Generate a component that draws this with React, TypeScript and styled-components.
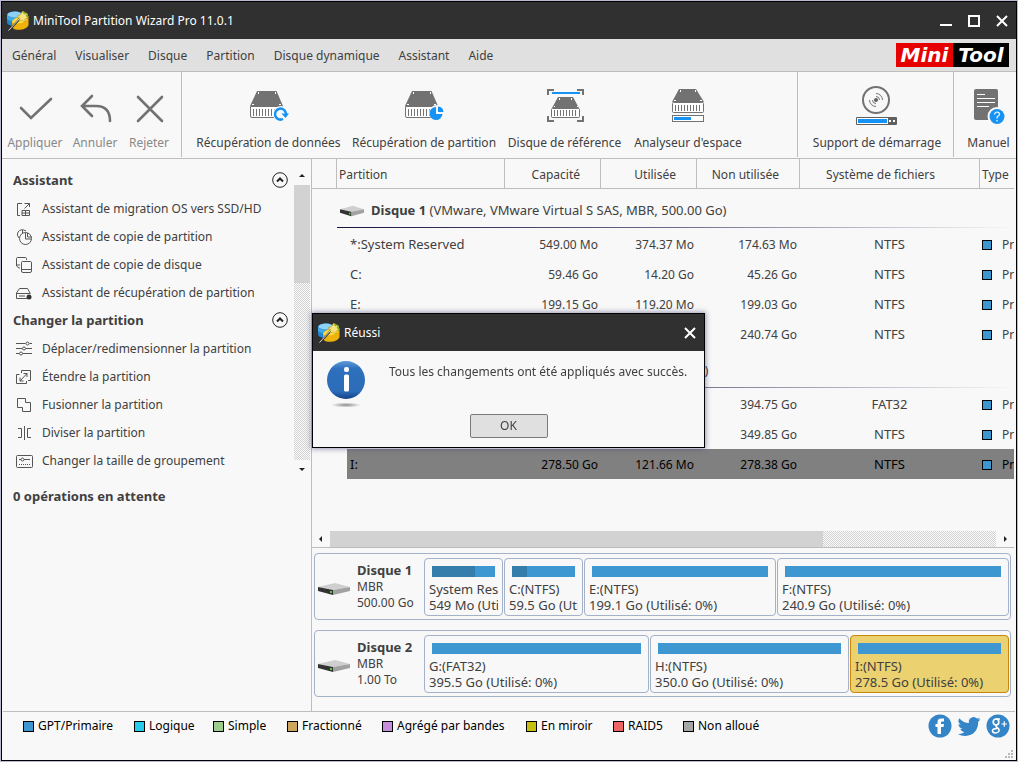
import React from "react";
import styled, { createGlobalStyle, css } from "styled-components";

const GlobalStyle = createGlobalStyle`
  *, *::before, *::after { box-sizing: border-box; }
  body { margin: 0; background: #b9b9cf; }
  body, button { font-family: "Noto Sans", Tahoma, sans-serif; font-size: 12px; line-height: 16px; color: #404040; }
  button { margin: 0; padding: 0; border: 0; background: none; cursor: pointer; }
  h2, p, ul { margin: 0; padding: 0; list-style: none; }
  svg { display: block; flex: none; }
`;

const line = "#bdbdbd";

const Page = styled.div`
  min-height: 100vh;
  padding: 1px;
  display: flex;
`;
const Window = styled.div`
  flex: 1;
  min-width: 0;
  display: flex;
  flex-direction: column;
  border: 1px solid #000;
  background: #f8f8f8;
`;
const TitleBar = styled.header`
  display: flex;
  align-items: center;
  gap: 4px;
  height: 37px;
  padding: 0 8px 0 5px;
  background: #303030;
  color: #fff;
`;
const TitleText = styled.span`
  flex: 1;
  white-space: nowrap;
`;
const WindowButtons = styled.div`
  display: flex;
  gap: 16px;
`;
const MenuBar = styled.nav`
  display: flex;
  align-items: center;
  gap: 19px;
  height: 33px;
  padding: 0 7px 0 10px;
  background: #e0e0e0;
  border-bottom: 1px solid ${line};
`;
const MenuItem = styled.button`
  padding-top: 2px;
  white-space: nowrap;
`;
const Brand = styled.a`
  display: flex;
  margin-left: auto;
  height: 24px;
  color: #fff;
  background: #000;
  text-decoration: none;
  font: italic bold 20px/24px "DejaVu Sans", Verdana, sans-serif;
`;
const BrandHalf = styled.span<{ $red?: boolean }>`
  width: ${(p) => (p.$red ? 57 : 56)}px;
  text-align: center;
  background: ${(p) => (p.$red ? "#e60000" : "#000")};
`;

const Toolbar = styled.div`
  display: flex;
  height: 87px;
  padding-bottom: 1px;
  border-bottom: 1px solid ${line};
`;
const ToolGroup = styled.div<{ $width?: number; $pad: number; $last?: boolean }>`
  display: flex;
  gap: 11px;
  padding-left: ${(p) => p.$pad}px;
  border-right: ${(p) => (p.$last ? "0" : `1px solid ${line}`)};
  ${(p) => (p.$width ? css`flex: 0 0 ${p.$width}px;` : css`flex: 1;`)}
`;
const ToolButton = styled.button<{ $width: number; $muted?: boolean }>`
  display: flex;
  flex-direction: column;
  align-items: center;
  justify-content: flex-end;
  gap: 8px;
  width: ${(p) => p.$width}px;
  padding-bottom: 6px;
  white-space: nowrap;
  color: ${(p) => (p.$muted ? "#888" : "#404040")};
`;

const Body = styled.div`
  flex: 1;
  display: flex;
`;
const Sidebar = styled.aside`
  flex: 0 0 310px;
  border-right: 1px solid ${line};
`;
const SideScroll = styled.div`
  display: flex;
  padding-top: 8px;
`;
const SideContent = styled.div`
  flex: 1;
  padding: 0 0 3px 11px;
`;
const SideHeading = styled.h2`
  display: flex;
  align-items: center;
  justify-content: space-between;
  height: 28px;
  padding: 0 6px 2px 0;
  font-size: 13px;
`;
const SideItem = styled.button`
  display: flex;
  align-items: center;
  gap: 10px;
  width: 100%;
  height: 28px;
  padding-left: 3px;
  text-align: left;
  white-space: nowrap;
`;
const Pending = styled.p`
  padding: 10px 11px;
  font-size: 13px;
  font-weight: bold;
`;
const checker = css`
  background: repeating-conic-gradient(#d2d2d2 0 25%, #fbfbfb 0 50%) 0 0 / 2px 2px;
`;
const VScroll = styled.div`
  display: flex;
  flex-direction: column;
  width: 16px;
  margin-right: 1px;
`;
const HScroll = styled.div`
  display: flex;
  height: 17px;
  margin-right: 2px;
  border-bottom: 1px solid ${line};
`;
const Track = styled.div`
  flex: 1;
  display: flex;
  ${checker}
`;
const VThumb = styled.div`
  width: 100%;
  height: 98px;
  background: #d2d2d2;
`;
const HThumb = styled.div`
  width: 74%;
  background: #d2d2d2;
`;
const ArrowButton = styled.button`
  display: grid;
  place-items: center;
  width: 18px;
  height: 16px;
  flex: none;
`;
const VArrowButton = styled(ArrowButton)`
  width: 16px;
  height: 18px;
`;

const Main = styled.main`
  flex: 1;
  min-width: 0;
  display: flex;
  flex-direction: column;
`;
const TableArea = styled.div`
  flex: 1;
  margin-right: 2px;
  overflow: hidden;
`;
const Table = styled.table`
  width: calc(100% + 60px);
  table-layout: fixed;
  border-collapse: separate;
  border-spacing: 0;
`;
const Th = styled.th<{ $width?: number; $align?: string; $right?: number }>`
  width: ${(p) => (p.$width ? `${p.$width}px` : "auto")};
  height: 30px;
  padding: 2px ${(p) => p.$right ?? 20}px 0 2px;
  border-right: 1px solid ${line};
  border-bottom: 1px solid ${line};
  font-weight: normal;
  text-align: ${(p) => p.$align ?? "right"};
`;
const DiskCell = styled.td`
  height: 40px;
  padding: 0 60px 0 25px;
`;
const DiskTitle = styled.div`
  display: flex;
  align-items: center;
  gap: 7px;
  height: 40px;
  padding: 2px 0 0 3px;
  background: linear-gradient(to right, #14143c, #6c6c8c 50%, #f8f8f8) 0 38px / 100% 1px no-repeat;
  font-size: 13px;
  white-space: nowrap;

  svg { margin-top: 2px; }
`;
const Tr = styled.tr<{ $selected?: boolean }>`
  height: 30px;
  ${(p) =>
    p.$selected &&
    css`
      color: #000;
      td { background: #808080; }
      td:first-child { background: none; }
      td:nth-child(2) { background: linear-gradient(to right, #f8f8f8 10px, #808080 10px); }
    `}
`;
const Td = styled.td<{ $align?: string }>`
  padding: 2px 3px 0 2px;
  text-align: ${(p) => p.$align ?? "right"};
  white-space: nowrap;
`;
const NameTd = styled(Td)`
  padding: 0 3px 0 13px;
  font-size: 13px;
  text-align: left;
`;
const SystemTd = styled(Td)`
  padding: 0 3px 0 2px;
  font-size: 13px;
  text-align: center;
`;
const TypeValue = styled.span`
  display: flex;
  align-items: center;
  gap: 10px;
`;
const Swatch = styled.span<{ $color: string; $size: number }>`
  flex: none;
  width: ${(p) => p.$size}px;
  height: ${(p) => p.$size}px;
  border: 1px solid #000;
  background: ${(p) => p.$color};
`;

const DiskMap = styled.section`
  display: flex;
  flex-direction: column;
  gap: 10px;
  padding: 5px 5px 14px 2px;
`;
const DiskCard = styled.div`
  display: flex;
  height: 67px;
  padding: 4px 1px 0 3px;
  border: 1px solid #a3b1c9;
  border-radius: 4px;
`;
const DiskInfo = styled.div`
  display: flex;
  align-items: center;
  gap: 7px;
  flex: 0 0 106px;
  height: 58px;
  white-space: nowrap;

  svg { margin-top: 4px; }
`;
const DiskName = styled.b`
  display: block;
  padding-bottom: 1px;
  font-size: 13px;
  line-height: 15px;
`;
const Blocks = styled.div<{ $columns: string }>`
  flex: 1;
  display: grid;
  grid-template-columns: ${(p) => p.$columns};
  gap: 1px;
  height: 58px;
`;
const Block = styled.button<{ $selected?: boolean }>`
  display: flex;
  flex-direction: column;
  min-width: 0;
  padding: 7px 4px 0;
  border: 1px solid ${(p) => (p.$selected ? "#c8860a" : "#a3b1c9")};
  border-radius: 4px;
  background: ${(p) => (p.$selected ? "#ebd170" : "#f8f8f8")};
  font-size: 13px;
  text-align: left;
`;
const Bar = styled.span`
  height: 11px;
  margin: 0 3px 4px;
  align-self: stretch;
  background: #3e97d1;
`;
const BarUsed = styled.span`
  display: block;
  height: 100%;
  background: #357dab;
`;
const BlockText = styled.span`
  max-width: 100%;
  overflow: hidden;
  white-space: nowrap;
`;

const Footer = styled.footer`
  display: flex;
  justify-content: space-between;
  height: 49px;
  margin: 0 1px;
  padding: 2px 2px 2px 20px;
  border-top: 1px solid ${line};
  color: #000;
`;
const Legend = styled.ul`
  display: flex;
  height: 24px;
`;
const LegendItem = styled.li<{ $width: number }>`
  display: flex;
  align-items: center;
  gap: 4px;
  width: ${(p) => p.$width}px;
  white-space: nowrap;
`;
const FooterEnd = styled.div`
  display: flex;
  flex-direction: column;
  justify-content: space-between;
  align-items: flex-end;
`;
const Social = styled.div`
  display: flex;
  gap: 5px;
  padding-right: 3px;
`;

const Overlay = styled.div`
  position: fixed;
  inset: 0;
  display: grid;
  place-items: center;
  padding: 0 1px 1px 0;
`;
const Dialog = styled.div`
  width: 393px;
  border: 1px solid #000;
  background: #f8f8f8;
  box-shadow: 0 0 5px 1px rgba(60, 60, 120, 0.5);
`;
const DialogBody = styled.div`
  display: flex;
  gap: 24px;
  height: 62px;
  padding: 10px 9px 0 14px;
`;
const DialogText = styled.p`
  padding-top: 3px;
  white-space: nowrap;
`;
const DialogActions = styled.div`
  display: flex;
  justify-content: center;
  padding: 1px 0 9px;
`;
const OkButton = styled.button`
  width: 78px;
  height: 24px;
  border: 1px solid #7a7a7a;
  border-radius: 2px;
  background: #e0e0e0;
`;

const AppIcon = () => (
  <svg width="22" height="22" viewBox="0 0 22 22" aria-hidden="true">
    <path d="M0 5C0 2 6 1 11 1.500V16C5 17 0 15 0 12Z" fill="#1f86d0" />
    <path d="M0 5C3 8 8 8 11 7V11C6 12 2 11 0 9Z" fill="#3fa9ea" />
    <ellipse cx="8" cy="4.500" rx="7.500" ry="3" fill="#8fd0f5" />
    <path d="M5 12C6 8 12 6 21.500 6V15C20 20.500 7 21.500 5 17Z" fill="#eeb20a" />
    <path d="M5 12C7 8 14 6 21 7C21 12 10 15.500 5 12Z" fill="#ffe03c" />
    <path d="M14 3l2-2 5 3v5l-5-1z" fill="#76b82a" />
    <path d="M1 21.500L13 8.500" stroke="#333" strokeWidth="2" />
    <path d="M1.500 20.500L13 8" stroke="#ddd" strokeWidth="1" />
    <path d="M16 1l1 3 3-1-1 3 2 2-3 1 0 3-3-2-3 1 1-3-3-2 3-1z" fill="#f8e27a" stroke="#a88a20" strokeWidth=".5" />
  </svg>
);
const CloseIcon = () => (
  <svg width="12" height="12" viewBox="0 0 12 12" aria-hidden="true">
    <path d="M1 1L11 11M11 1L1 11" stroke="#fff" strokeWidth="2" />
  </svg>
);

const Hdd = () => (
  <g>
    <path d="M9 4H28.500L35 19H2Z" fill="#727272" />
    <path d="M10 5h1v2h-1zM27 5h1v2h-1zM4 17h2v1H4zM31 17h2v1h-2z" fill="#fff" />
    <path d="M2.500 19.500h32v9.500q0 1.500-1.500 1.500H4q-1.500 0-1.500-1.500Z" fill="#fff" stroke="#727272" />
    <path d="M5.500 22v7M8.500 22v7M11.500 22v7M14.500 22v7M17.500 22v7M20.500 22v7M23.500 22v7M26.500 22v7M29.500 22v7M32 22v7" stroke="#727272" />
  </g>
);
const stroke = { fill: "none", stroke: "#727272", strokeWidth: 2.6, strokeLinecap: "round" as const };

const toolIcons: Record<string, React.ReactNode> = {
  apply: <path d="M7 21L17 31L37 12" {...stroke} />,
  undo: <path d="M18 9L8 19L18 29M8 19H22Q36 19 36 34" {...stroke} />,
  discard: <path d="M10 10L34 34M34 10L10 34" {...stroke} />,
  dataRecovery: (
    <>
      <Hdd />
      <circle cx="33" cy="27" r="8" fill="#f8f8f8" />
      <path d="M35 32A5.500 5.500 0 1 1 38 27" fill="none" stroke="#1492f5" strokeWidth="2.500" />
      <path d="M33.500 26.500H41L37.500 31Z" fill="#1492f5" />
    </>
  ),
  partitionRecovery: (
    <>
      <Hdd />
      <circle cx="34" cy="26" r="8" fill="#f8f8f8" />
      <path d="M33 27V20A6.500 6.500 0 1 0 39.500 27Z" fill="#1492f5" />
      <path d="M35 25V19.500A6 6 0 0 1 40.500 25Z" fill="#1492f5" />
    </>
  ),
  benchmark: (
    <g transform="translate(2 0)">
      <path d="M2 8V3H8M31 3H37V8M2 29V34H8M31 34H37V29" fill="none" stroke="#727272" strokeWidth="2" />
      <path d="M6 6H34" stroke="#1492f5" strokeWidth="2" />
      <path d="M12 10H27L33 21H6Z" fill="#727272" />
      <path d="M13 11h1v2h-1zM25 11h1v2h-1zM8 19h1v1H8zM31 19h1v1h-1z" fill="#fff" />
      <rect x="5.500" y="21.500" width="28" height="9" rx="1" fill="#fff" stroke="#727272" />
      <path d="M8.500 23v6M11.500 23v6M14.500 23v6M17.500 23v6M20.500 23v6M23.500 23v6M26.500 23v6M29.500 23v6" stroke="#727272" />
    </g>
  ),
  space: (
    <g transform="translate(1 0)">
      <path d="M11 2H28L36 15H4Z" fill="#727272" />
      <path d="M12 3h1v2h-1zM27 3h1v2h-1zM6 13h2v1H6zM32 13h2v1h-2z" fill="#fff" />
      <rect x="4.500" y="15.500" width="31" height="10" rx="1" fill="#fff" stroke="#727272" />
      <path d="M7.500 18v6M10.500 18v6M13.500 18v6M16.500 18v6M19.500 18v6M22.500 18v6M25.500 18v6M28.500 18v6M31.500 18v6" stroke="#727272" />
      <rect x="4.500" y="28.500" width="31" height="6" fill="#fff" stroke="#727272" />
      <path d="M6 30h17v3H6z" fill="#1492f5" />
    </g>
  ),
  bootMedia: (
    <>
      <circle cx="20" cy="13" r="13" fill="#f8f8f8" stroke="#727272" strokeWidth="2" />
      <circle cx="20" cy="13" r="2" fill="#606060" />
      <path d="M20 6.500A6.500 6.500 0 0 1 26.500 13M13.500 13A6.500 6.500 0 0 0 20 19.500M20 9.500A3.500 3.500 0 0 1 23.500 13M16.500 13A3.500 3.500 0 0 0 20 16.500" fill="none" stroke="#727272" strokeWidth="1" />
      <rect x="0" y="30" width="41" height="8" rx="1" fill="#606060" />
      <path d="M1 31H32V37H1z" fill="#fff" />
      <path d="M2 32H31V36H2z" fill="#1492f5" />
      <path d="M33 33h2v2h-2zM37 33h2v2h-2z" fill="#fff" />
    </>
  ),
  manual: (
    <g transform="translate(1 0)">
      <rect x="5" y="2" width="24" height="31" rx="2" fill="#727272" />
      <path d="M8 7.500h8M8 11.500h18M8 15.500h18M8 19.500h12" stroke="#fff" />
      <circle cx="28" cy="29.500" r="9.500" fill="#f8f8f8" />
      <circle cx="28" cy="29.500" r="7.500" fill="#1492f5" />
      <path d="M25.500 27.500Q26 25 28 25Q30.500 25 30.500 27.500Q30.500 28.500 28.500 29.500Q28 30 28 31.500M28 33v1.500" fill="none" stroke="#fff" strokeWidth="1.200" />
    </g>
  ),
};
const ToolIcon = ({ name }: { name: string }) => (
  <svg width="42" height="40" viewBox="0 0 42 40" aria-hidden="true" overflow="visible">
    {toolIcons[name]}
  </svg>
);

const sideIcons: Record<string, React.ReactNode> = {
  migrate: (
    <>
      <path d="M6 2.500H1.500V14.500H4M8.500 2.500H13.500V6M13.500 2.500L8.500 7.500" />
      <path d="M6 9.500h7.500v5H6zM6 12h7.500M9.500 9.500v5" />
    </>
  ),
  copyPartition: (
    <>
      <path d="M3 9A5 5 0 0 1 2 3Q5-1 10 2M6.500 1v3" />
      <circle cx="9.500" cy="9.500" r="6" />
      <path d="M9.500 4V10H15M11.500 4v4h4" />
    </>
  ),
  copyDisk: <path d="M4 11H3L.5 9V1.500Q.5.500 1.500.500H9.500Q10.500.500 10.500 1.500V3M.5 8H4M6.500 4.500H14.500Q15.500 4.500 15.500 6V14Q15.500 15.500 14 15.500H7Q5.500 15.500 5.500 14V5.500Q5.500 4.500 6.500 4.500M5.500 12.500H15.500" />,
  recover: (
    <>
      <path d="M3.500 3.500H11.500L14 8M3.500 3.500L.5 8V13.500H11M.5 8.500H14.500M3 11h6" />
      <circle cx="13" cy="12" r="2.500" fill="#333" stroke="none" />
    </>
  ),
  resize: (
    <>
      <path d="M0 2.500H9.500M13.500 2.500H16M0 7.500H6M10 7.500H16M0 12.500H3M7 12.500H16" />
      <circle cx="11.500" cy="2.500" r="1.500" />
      <circle cx="8" cy="7.500" r="1.500" />
      <circle cx="5" cy="12.500" r="1.500" />
    </>
  ),
  extend: <path d="M5.500 4V1.500H14.500V11.500H12M3.500 5.500H.5V14.500H10.500V12M4 12L11 4.500M7.500 4.500H11V8M4 8.500V12H7.500" />,
  merge: <path d="M1.500 1.500H9.500V5.500H14.500V14.500H6.500V10.500H1.500Z" />,
  split: <path d="M8.500 1V15M2 3.500H5.500V12.500H2M15 3.500H11.500V12.500H15" />,
  cluster: (
    <>
      <rect x=".5" y="2.500" width="16" height="12" rx="1" />
      <path d="M3 6.500h2M8 6.500h6" />
      <circle cx="6.500" cy="6.500" r="1.500" />
      <path d="M3 11.500h11" strokeDasharray="1 1" />
    </>
  ),
};
const SideIcon = ({ name }: { name: string }) => (
  <svg width="16" height="16" viewBox="0 0 16 16" fill="none" stroke="#555" aria-hidden="true" overflow="visible">
    {sideIcons[name]}
  </svg>
);
const CollapseIcon = () => (
  <svg width="16" height="16" viewBox="0 0 16 16" fill="none" stroke="#222" aria-hidden="true">
    <circle cx="8" cy="8" r="7.300" />
    <path d="M5 9.500L8 6.500L11 9.500" strokeWidth="2" />
  </svg>
);
const Arrow = ({ d }: { d: string }) => (
  <svg width="8" height="8" viewBox="0 0 8 8" fill="#222" aria-hidden="true">
    <path d={d} />
  </svg>
);
const DriveIcon = ({ width, height }: { width: number; height: number }) => (
  <svg width={width} height={height} viewBox="0 0 32 14" preserveAspectRatio="none" aria-hidden="true">
    <path d="M0 5L17 1L32 5L15 8Z" fill="#cfcfcf" />
    <path d="M15 8L32 5V9L15 13Z" fill="#a2a2a2" />
    <path d="M0 5L15 8V13L0 9Z" fill="#333" />
    <rect x="12" y="9" width="2" height="2" fill="#4fd02c" />
  </svg>
);
const InfoIcon = () => (
  <svg width="38" height="48" viewBox="0 0 38 48" aria-hidden="true">
    <defs>
      <linearGradient id="ball" x1="0" y1="0" x2="0" y2="1">
        <stop offset="0" stopColor="#5f9bd8" />
        <stop offset=".2" stopColor="#2e70bd" />
        <stop offset=".8" stopColor="#2c6cb8" />
        <stop offset="1" stopColor="#123f86" />
      </linearGradient>
      <radialGradient id="ground">
        <stop offset="0" stopColor="#8c8c8c" />
        <stop offset="1" stopColor="#8c8c8c" stopOpacity="0" />
      </radialGradient>
    </defs>
    <ellipse cx="19" cy="44" rx="15" ry="2.500" fill="url(#ground)" />
    <circle cx="19" cy="19" r="19" fill="url(#ball)" />
    <rect x="17" y="6" width="5" height="5" rx="2" fill="#fff" />
    <rect x="17" y="13.500" width="5" height="17" rx="1.500" fill="#fff" />
  </svg>
);
const Facebook = () => (
  <svg width="24" height="24" viewBox="0 0 24 24" aria-hidden="true">
    <circle cx="12" cy="12" r="11.500" fill="#3484c8" />
    <path d="M9.500 20V13H7.500V10H9.500V8Q9.500 4.500 13 4.500H16V7.500H14Q13 7.500 13 8.500V10H16L15.500 13H13V20Z" fill="#fff" />
  </svg>
);
const Twitter = () => (
  <svg width="24" height="24" viewBox="0 0 24 24" aria-hidden="true">
    <path fill="#3484c8" d="M23.500 5q-1 .6-2.400.8 1.200-.9 1.800-2.300-1.300.8-2.900 1.100A4.700 4.700 0 0 0 12 9Q6 8.700 2.300 4.200 0 8 3.700 10.600q-1.100 0-2.200-.6.100 3.600 3.800 4.700-1 .3-2.100.1 1.100 3 4.400 3.200-3 2.300-6.800 1.900 3.500 2.200 7.500 2.100Q21 21 21.300 7.600q1.300-1 2.200-2.600Z" />
  </svg>
);
const GooglePlus = () => (
  <svg width="24" height="24" viewBox="0 0 24 24" fill="none" stroke="#fff" aria-hidden="true">
    <circle cx="12" cy="12" r="11.500" fill="#3484c8" stroke="none" />
    <ellipse cx="10" cy="8" rx="2.800" ry="3" strokeWidth="1.700" />
    <path d="M10 5H14M11 11Q9 12 11 13.500Q13.500 15 13 17Q12 19 9.500 19Q6.500 19 6.500 16.800Q6.500 14.500 11 14.500" strokeWidth="1.600" />
    <path d="M15.500 10H21M18.250 7.250V12.750" strokeWidth="1.200" />
  </svg>
);

const menus = ["Général", "Visualiser", "Disque", "Partition", "Disque dynamique", "Assistant", "Aide"];

type Tool = { icon: string; label: string; width: number };
const editTools: Tool[] = [
  { icon: "apply", label: "Appliquer", width: 54 },
  { icon: "undo", label: "Annuler", width: 44 },
  { icon: "discard", label: "Rejeter", width: 42 },
];
const diskTools: Tool[] = [
  { icon: "dataRecovery", label: "Récupération de données", width: 145 },
  { icon: "partitionRecovery", label: "Récupération de partition", width: 144 },
  { icon: "benchmark", label: "Disque de référence", width: 115 },
  { icon: "space", label: "Analyseur d'espace", width: 110 },
];
const sections = [
  {
    title: "Assistant",
    items: [
      ["migrate", "Assistant de migration OS vers SSD/HD"],
      ["copyPartition", "Assistant de copie de partition"],
      ["copyDisk", "Assistant de copie de disque"],
      ["recover", "Assistant de récupération de partition"],
    ],
  },
  {
    title: "Changer la partition",
    items: [
      ["resize", "Déplacer/redimensionner la partition"],
      ["extend", "Étendre la partition"],
      ["merge", "Fusionner la partition"],
      ["split", "Diviser la partition"],
      ["cluster", "Changer la taille de groupement"],
    ],
  },
];
const disks = [
  {
    name: "Disque 1",
    detail: "(VMware, VMware Virtual S SAS, MBR, 500.00 Go)",
    size: "500.00 Go",
    columns: "79fr 79fr 192fr 232fr",
    rows: [
      ["*:System Reserved", "549.00 Mo", "374.37 Mo", "174.63 Mo", "NTFS"],
      ["C:", "59.46 Go", "14.20 Go", "45.26 Go", "NTFS"],
      ["E:", "199.15 Go", "119.20 Mo", "199.03 Go", "NTFS"],
      ["F:", "240.86 Go", "122.00 Mo", "240.74 Go", "NTFS"],
    ],
    blocks: [
      { name: "System Reserved", size: "549 Mo (Utilisé: 68%)", used: 68 },
      { name: "C:(NTFS)", size: "59.5 Go (Utilisé: 24%)", used: 24 },
      { name: "E:(NTFS)", size: "199.1 Go (Utilisé: 0%)", used: 0 },
      { name: "F:(NTFS)", size: "240.9 Go (Utilisé: 0%)", used: 0 },
    ],
  },
  {
    name: "Disque 2",
    detail: "(VMware, VMware Virtual S SAS, MBR, 1.00 To)",
    size: "1.00 To",
    columns: "225fr 199fr 159fr",
    rows: [
      ["G:", "395.50 Go", "768.00 Mo", "394.75 Go", "FAT32"],
      ["H:", "350.00 Go", "150.00 Mo", "349.85 Go", "NTFS"],
      ["I:", "278.50 Go", "121.66 Mo", "278.38 Go", "NTFS"],
    ],
    blocks: [
      { name: "G:(FAT32)", size: "395.5 Go (Utilisé: 0%)", used: 0 },
      { name: "H:(NTFS)", size: "350.0 Go (Utilisé: 0%)", used: 0 },
      { name: "I:(NTFS)", size: "278.5 Go (Utilisé: 0%)", used: 0 },
    ],
  },
];
const selectedName = "I:";
const legend: [string, string, number][] = [
  ["#3e97d1", "GPT/Primaire", 111],
  ["#27ccec", "Logique", 79],
  ["#9ccb8c", "Simple", 74],
  ["#cda55c", "Fractionné", 95],
  ["#c68fdc", "Agrégé par bandes", 144],
  ["#c5c013", "En miroir", 87],
  ["#ee6363", "RAID5", 70],
  ["#a6a6a6", "Non alloué", 90],
];

const ToolSet = ({ tools, muted }: { tools: Tool[]; muted?: boolean }) => (
  <>
    {tools.map((t) => (
      <ToolButton key={t.icon} $width={t.width} $muted={muted}>
        <ToolIcon name={t.icon} />
        {t.label}
      </ToolButton>
    ))}
  </>
);

export default function App() {
  return (
    <Page>
      <GlobalStyle />
      <Window>
        <TitleBar>
          <AppIcon />
          <TitleText>MiniTool Partition Wizard Pro 11.0.1</TitleText>
          <WindowButtons>
            <button aria-label="Réduire">
              <svg width="12" height="12" viewBox="0 0 12 12"><path d="M0 9h12v2H0z" fill="#fff" /></svg>
            </button>
            <button aria-label="Agrandir">
              <svg width="12" height="12" viewBox="0 0 12 12"><rect x="1" y="1" width="10" height="10" fill="none" stroke="#fff" strokeWidth="2" /></svg>
            </button>
            <button aria-label="Fermer"><CloseIcon /></button>
          </WindowButtons>
        </TitleBar>

        <MenuBar>
          {menus.map((m) => (
            <MenuItem key={m}>{m}</MenuItem>
          ))}
          <Brand href="#">
            <BrandHalf $red>Mini</BrandHalf>
            <BrandHalf>Tool</BrandHalf>
          </Brand>
        </MenuBar>

        <Toolbar>
          <ToolGroup $width={180} $pad={6}>
            <ToolSet tools={editTools} muted />
          </ToolGroup>
          <ToolGroup $pad={14}>
            <ToolSet tools={diskTools} />
          </ToolGroup>
          <ToolGroup $width={156} $pad={14}>
            <ToolSet tools={[{ icon: "bootMedia", label: "Support de démarrage", width: 130 }]} />
          </ToolGroup>
          <ToolGroup $width={62} $pad={14} $last>
            <ToolSet tools={[{ icon: "manual", label: "Manuel", width: 41 }]} />
          </ToolGroup>
        </Toolbar>

        <Body>
          <Sidebar>
            <SideScroll>
              <SideContent>
                {sections.map((s) => (
                  <section key={s.title}>
                    <SideHeading>
                      {s.title}
                      <button aria-label={`Replier ${s.title}`}><CollapseIcon /></button>
                    </SideHeading>
                    {s.items.map(([icon, label]) => (
                      <SideItem key={icon}>
                        <SideIcon name={icon} />
                        {label}
                      </SideItem>
                    ))}
                  </section>
                ))}
              </SideContent>
              <VScroll>
                <VArrowButton aria-label="Défiler vers le haut"><Arrow d="M1 5L4 2L7 5Z" /></VArrowButton>
                <Track><VThumb /></Track>
                <VArrowButton aria-label="Défiler vers le bas"><Arrow d="M1 3L4 6L7 3Z" /></VArrowButton>
              </VScroll>
            </SideScroll>
            <Pending>0 opérations en attente</Pending>
          </Sidebar>

          <Main>
            <TableArea>
              <Table>
                <thead>
                  <tr>
                    <Th $width={25} />
                    <Th $width={168} $align="left">Partition</Th>
                    <Th $width={96}>Capacité</Th>
                    <Th $width={96}>Utilisée</Th>
                    <Th $width={103}>Non utilisée</Th>
                    <Th $right={44}>Système de fichiers</Th>
                    <Th $width={94} $align="left">Type</Th>
                  </tr>
                </thead>
                {disks.map((d) => (
                  <tbody key={d.name}>
                    <tr>
                      <DiskCell colSpan={7}>
                        <DiskTitle>
                          <DriveIcon width={24} height={12} />
                          <span><b>{d.name}</b> {d.detail}</span>
                        </DiskTitle>
                      </DiskCell>
                    </tr>
                    {d.rows.map(([name, size, used, free, fs]) => (
                      <Tr key={name} $selected={name === selectedName}>
                        <Td />
                        <NameTd>{name}</NameTd>
                        <Td>{size}</Td>
                        <Td>{used}</Td>
                        <Td>{free}</Td>
                        <SystemTd>{fs}</SystemTd>
                        <Td><TypeValue><Swatch $color="#3e97d1" $size={10} />Primaire</TypeValue></Td>
                      </Tr>
                    ))}
                  </tbody>
                ))}
              </Table>
            </TableArea>
            <HScroll>
              <ArrowButton aria-label="Défiler vers la gauche"><Arrow d="M5 1L2 4L5 7Z" /></ArrowButton>
              <Track><HThumb /></Track>
              <ArrowButton aria-label="Défiler vers la droite"><Arrow d="M3 1L6 4L3 7Z" /></ArrowButton>
            </HScroll>
            <DiskMap>
              {disks.map((d) => (
                <DiskCard key={d.name}>
                  <DiskInfo>
                    <DriveIcon width={32} height={14} />
                    <div>
                      <DiskName>{d.name}</DiskName>
                      MBR<br />
                      {d.size}
                    </div>
                  </DiskInfo>
                  <Blocks $columns={d.columns}>
                    {d.blocks.map((b) => (
                      <Block key={b.name} $selected={b.name.startsWith(selectedName)}>
                        <Bar><BarUsed style={{ width: `${b.used}%` }} /></Bar>
                        <BlockText>{b.name}</BlockText>
                        <BlockText>{b.size}</BlockText>
                      </Block>
                    ))}
                  </Blocks>
                </DiskCard>
              ))}
            </DiskMap>
          </Main>
        </Body>

        <Footer>
          <Legend>
            {legend.map(([color, label, width]) => (
              <LegendItem key={label} $width={width}>
                <Swatch $color={color} $size={11} />
                {label}
              </LegendItem>
            ))}
          </Legend>
          <FooterEnd>
            <Social>
              <a href="#" aria-label="Facebook"><Facebook /></a>
              <a href="#" aria-label="Twitter"><Twitter /></a>
              <a href="#" aria-label="Google+"><GooglePlus /></a>
            </Social>
            <svg width="8" height="8" viewBox="0 0 8 8" fill="#bbb" aria-hidden="true">
              <path d="M6 0h2v2H6zM3 3h2v2H3zM6 3h2v2H6zM0 6h2v2H0zM3 6h2v2H3zM6 6h2v2H6z" />
            </svg>
          </FooterEnd>
        </Footer>
      </Window>

      <Overlay>
        <Dialog role="dialog" aria-label="Réussi">
          <TitleBar>
            <AppIcon />
            <TitleText>Réussi</TitleText>
            <button aria-label="Fermer"><CloseIcon /></button>
          </TitleBar>
          <DialogBody>
            <InfoIcon />
            <DialogText>Tous les changements ont été appliqués avec succès.</DialogText>
          </DialogBody>
          <DialogActions>
            <OkButton>OK</OkButton>
          </DialogActions>
        </Dialog>
      </Overlay>
    </Page>
  );
}
